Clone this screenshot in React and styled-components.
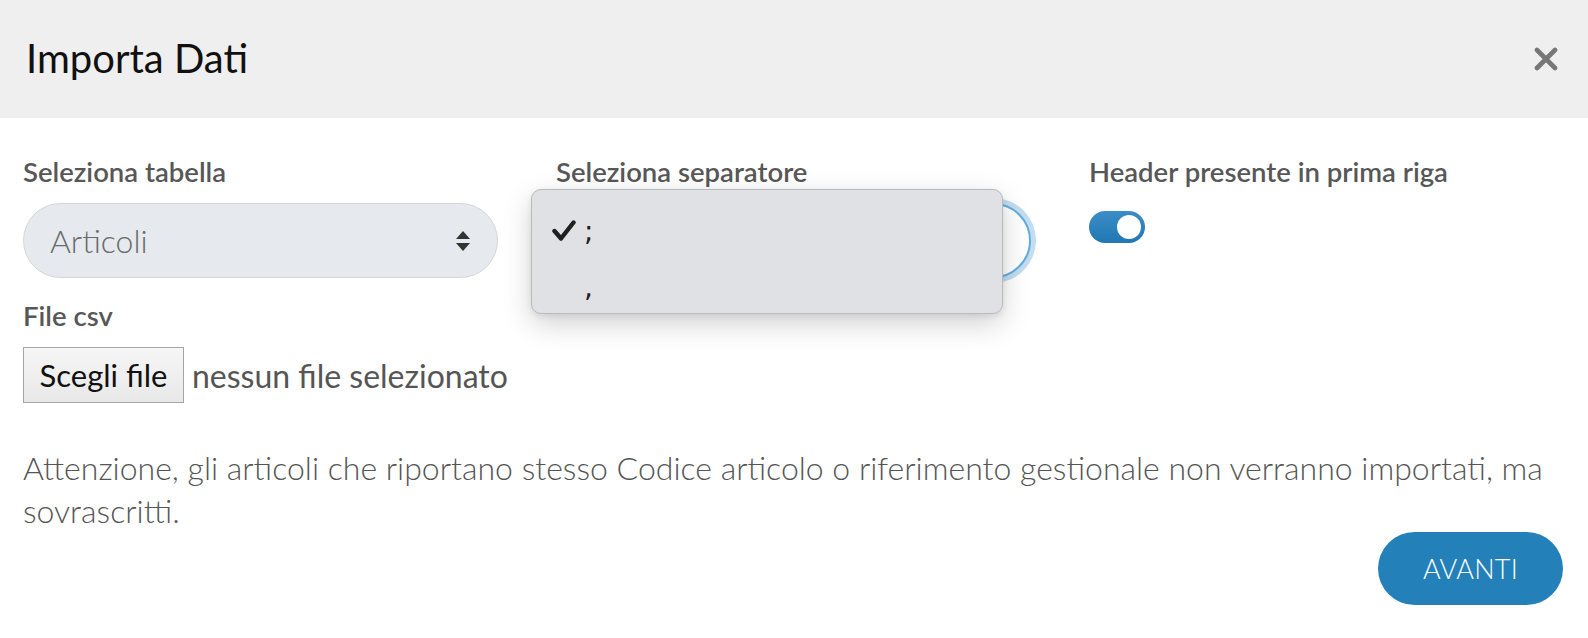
import React from 'react';
import styled, { createGlobalStyle } from 'styled-components';

const GlobalStyle = createGlobalStyle`
  html, body {
    margin: 0;
    padding: 0;
    background: #ffffff;
  }
  body {
    font-family: Lato, "Open Sans", sans-serif;
  }
`;

const Modal = styled.div`
  width: 1588px;
  height: 638px;
  background: #fff;
  overflow: hidden;
`;

const Header = styled.div`
  height: 118px;
  background: #efefef;
  display: flex;
  align-items: center;
  justify-content: space-between;
  padding: 0 30px 0 26px;
  box-sizing: border-box;
`;

const Title = styled.h1`
  margin: 0;
  font-family: Lato, sans-serif;
  font-weight: 400;
  font-size: 40px;
  color: #111;
  padding-bottom: 2px;
`;

const CloseButton = styled.button`
  border: none;
  background: none;
  padding: 0;
  width: 24px;
  height: 24px;
  display: flex;
  align-items: center;
  justify-content: center;
  cursor: pointer;
`;

const Body = styled.div`
  padding: 38px 25px 0 23px;
`;

const FieldRow = styled.div`
  display: grid;
  grid-template-columns: 475px 475px 1fr;
  column-gap: 58px;
`;

const Field = styled.div`
  display: flex;
  flex-direction: column;
`;

const Label = styled.label`
  font-family: Lato, sans-serif;
  font-weight: 600;
  font-size: 27.5px;
  line-height: 32px;
  color: #575757;
  margin-bottom: ${(p) => p.gap || 15}px;
`;

const SelectWrap = styled.div`
  position: relative;
  height: 75px;
`;

const SelectBox = styled.div`
  height: 75px;
  box-sizing: border-box;
  border-radius: 38px;
  border: ${(p) => (p.focused ? '2px solid #62ace0' : '1px solid #d3d6da')};
  background: ${(p) => (p.focused ? '#ffffff' : '#e6e9ee')};
  box-shadow: ${(p) => (p.focused ? '0 0 0 5px rgba(120, 180, 222, 0.45)' : 'none')};
  display: flex;
  align-items: center;
  justify-content: space-between;
  padding: 0 26px 0 26px;
  font-family: Lato, sans-serif;
  font-weight: 300;
  font-size: 32px;
  color: #6a6a6a;
`;

const Arrows = () => (
  <svg width="16" height="22" viewBox="0 0 16 22">
    <polygon points="8,1 15,9 1,9" fill="#333" />
    <polygon points="1,13 15,13 8,21" fill="#333" />
  </svg>
);

const Popup = styled.div`
  position: absolute;
  left: -25px;
  top: -14px;
  width: 472px;
  height: 125px;
  box-sizing: border-box;
  background: #e0e1e5;
  border: 1px solid #b9babd;
  border-radius: 10px;
  box-shadow: 0 10px 28px rgba(0, 0, 0, 0.18), 0 2px 6px rgba(0, 0, 0, 0.08);
  padding-top: 13px;
  z-index: 2;
`;

const Option = styled.div`
  height: 56px;
  display: flex;
  align-items: center;
  padding-left: 20px;
  font-family: "DejaVu Sans", sans-serif;
  font-size: 28px;
  color: #1e1e1e;
`;

const CheckSlot = styled.span`
  width: 32px;
  display: inline-flex;
  align-items: center;
`;

const Check = () => (
  <svg width="24" height="22" viewBox="0 0 24 22">
    <polyline
      points="2.5,11 9,18.5 21.5,2.5"
      fill="none"
      stroke="#1f1f1f"
      strokeWidth="4.4"
      strokeLinecap="round"
      strokeLinejoin="round"
    />
  </svg>
);

const Toggle = styled.div`
  width: 56px;
  height: 32px;
  margin-top: 7px;
  border-radius: 16px;
  background: linear-gradient(180deg, #3c8dc6 0%, #1f77b3 100%);
  position: relative;
  &::after {
    content: '';
    position: absolute;
    right: 4px;
    top: 4px;
    width: 24px;
    height: 24px;
    border-radius: 50%;
    background: #fff;
  }
`;

const FileField = styled.div`
  display: flex;
  flex-direction: column;
  margin-top: 22px;
`;

const FileLine = styled.div`
  display: flex;
  align-items: center;
  gap: 8px;
`;

const FileButton = styled.button`
  height: 56px;
  width: 161px;
  box-sizing: border-box;
  border: 1px solid #a5a5a5;
  border-radius: 0;
  background: linear-gradient(180deg, #f6f6f6 0%, #e8e8e8 100%);
  font-family: Lato, sans-serif;
  font-weight: 400;
  font-size: 31px;
  color: #111;
  padding: 0;
`;

const FileName = styled.span`
  font-family: Lato, sans-serif;
  font-weight: 400;
  font-size: 32px;
  color: #555;
`;

const Notice = styled.p`
  margin: 43px 0 0;
  font-family: Lato, sans-serif;
  font-weight: 300;
  font-size: 32px;
  line-height: 43px;
  color: #555;
`;

const Footer = styled.div`
  display: flex;
  justify-content: flex-end;
`;

const PrimaryButton = styled.button`
  width: 185px;
  height: 73px;
  border: none;
  border-radius: 37px;
  background: #2380b8;
  color: #fff;
  font-family: Lato, sans-serif;
  font-weight: 300;
  font-size: 27px;
  letter-spacing: 0.3px;
  text-transform: uppercase;
  padding: 0;
`;

const App = () => {
  return (
    <>
      <GlobalStyle />
      <Modal>
        <Header>
          <Title>Importa Dati</Title>
          <CloseButton aria-label="Chiudi">
            <svg width="24" height="24" viewBox="0 0 24 24">
              <path d="M3 3 L21 21 M21 3 L3 21" stroke="#777" strokeWidth="4.6" strokeLinecap="round" />
            </svg>
          </CloseButton>
        </Header>
        <Body>
          <FieldRow>
            <Field>
              <Label>Seleziona tabella</Label>
              <SelectWrap>
                <SelectBox>
                  <span>Articoli</span>
                  <Arrows />
                </SelectBox>
              </SelectWrap>
            </Field>
            <Field>
              <Label>Seleziona separatore</Label>
              <SelectWrap>
                {/* the open list covers the selected value */}
                <SelectBox focused>
                  <span />
                  <Arrows />
                </SelectBox>
                <Popup>
                  <Option>
                    <CheckSlot><Check /></CheckSlot>;
                  </Option>
                  <Option>
                    <CheckSlot />,
                  </Option>
                </Popup>
              </SelectWrap>
            </Field>
            <Field>
              <Label gap={16}>Header presente in prima riga</Label>
              <Toggle />
            </Field>
          </FieldRow>
          <FileField>
            <Label>File csv</Label>
            <FileLine>
              <FileButton>Scegli file</FileButton>
              <FileName>nessun file selezionato</FileName>
            </FileLine>
          </FileField>
          <Notice>
            Attenzione, gli articoli che riportano stesso Codice articolo o riferimento gestionale non verranno importati, ma sovrascritti.
          </Notice>
          <Footer>
            <PrimaryButton>Avanti</PrimaryButton>
          </Footer>
        </Body>
      </Modal>
    </>
  );
};

export default App;
